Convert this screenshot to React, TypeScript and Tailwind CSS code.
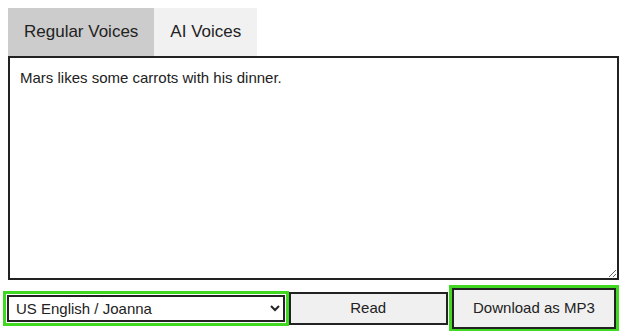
import { useState } from "react"

export default function App() {
  const [tab, setTab] = useState("regular")
  const [text, setText] = useState("Mars likes some carrots with his dinner.")

  return (
    <div className="p-2 font-['Liberation_Sans',Arial,sans-serif] text-[#222] bg-white">
      {/* tabs */}
      <div className="flex">
        <button
          onClick={() => setTab("regular")}
          className={`px-4 py-[14px] text-[17px] leading-5 ${tab === "regular" ? "bg-[#ccc]" : "bg-[#f1f1f1]"}`}
        >
          Regular Voices
        </button>
        <button
          onClick={() => setTab("ai")}
          className={`px-4 py-[14px] text-[17px] leading-5 ${tab === "ai" ? "bg-[#ccc]" : "bg-[#f1f1f1]"}`}
        >
          AI Voices
        </button>
      </div>

      <textarea
        value={text}
        onChange={(e) => setText(e.target.value)}
        className="block w-[611px] h-[224px] border-2 border-[#222] pl-[10px] pr-2 pt-[11px] text-[15px] leading-[18px] outline-none"
      />

      {/* controls */}
      <div className="flex items-center mt-2 h-10">
        <select
          defaultValue="joanna"
          className="w-[279px] h-[27px] border-2 border-[#222] bg-white text-[15px] pl-[3px] outline-[3px] outline-solid outline-[#40d820] outline-offset-1 -ml-px"
        >
          <option value="joanna">US English / Joanna</option>
          <option value="matthew">US English / Matthew</option>
          <option value="amy">British English / Amy</option>
        </select>
        <button className="ml-[4px] w-[160px] h-[33px] border-2 border-[#222] bg-[#f0f0f0] text-[15px]">
          Read
        </button>
        <button className="ml-[4px] w-[165px] h-[41px] border-2 border-[#222] bg-[#f0f0f0] text-[15px] outline-[3px] outline-solid outline-[#40d820] outline-offset-0">
          Download as MP3
        </button>
      </div>
    </div>
  )
}
